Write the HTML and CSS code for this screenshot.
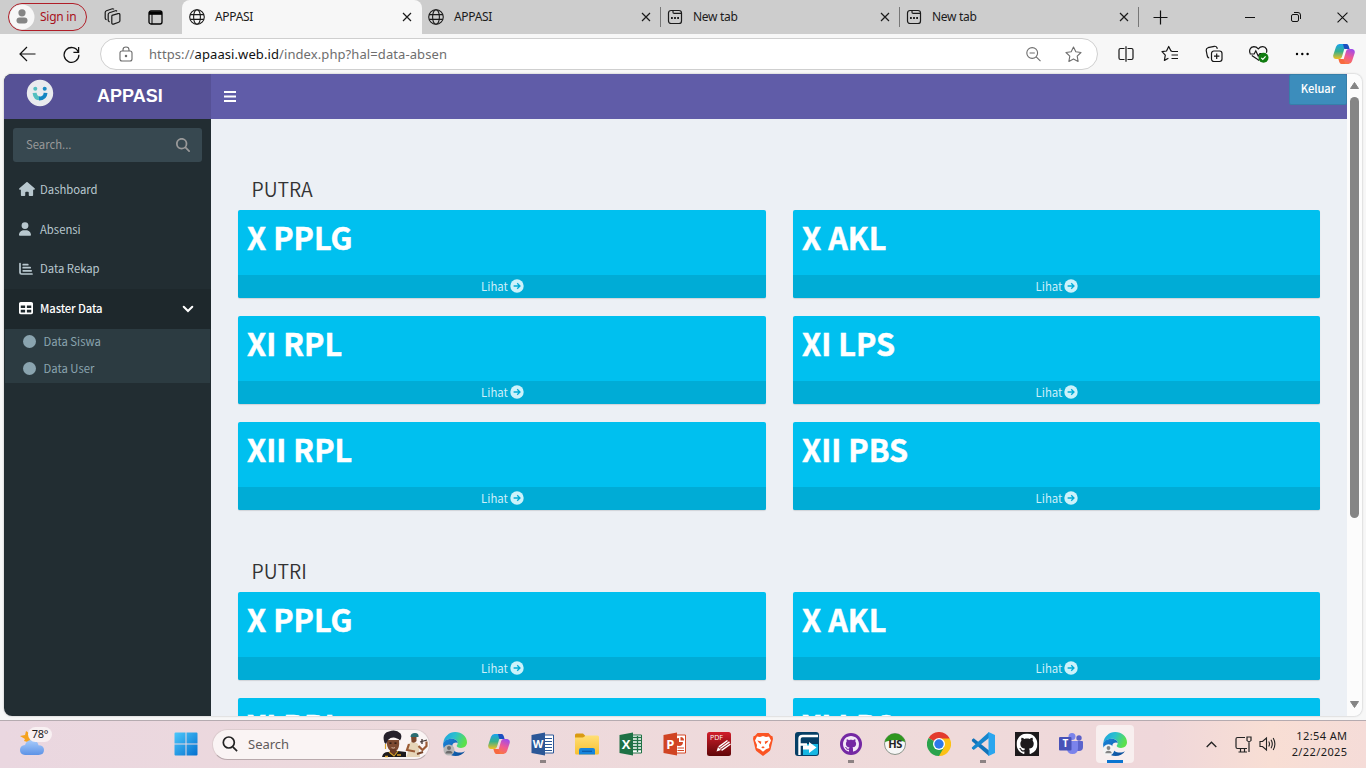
FILE: index.html
```html
<!DOCTYPE html>
<html lang="id">
<head>
<meta charset="utf-8">
<title>APPASI</title>
<link rel="stylesheet" href="styles.css">
</head>
<body>
<svg class="defs" width="0" height="0">
  <defs>
    <linearGradient id="gEdgeTop" x1="0" y1="0" x2="1" y2=".35"><stop offset="0" stop-color="#1d9fe0"/><stop offset=".5" stop-color="#2bc0cf"/><stop offset="1" stop-color="#5be04c"/></linearGradient>
    <linearGradient id="gEdgeLow" x1="0" y1="0" x2="1" y2="1"><stop offset="0" stop-color="#1a86dc"/><stop offset="1" stop-color="#0b4a94"/></linearGradient>
    <linearGradient id="gCpA" x1="0" y1="0" x2="0" y2="1"><stop offset="0" stop-color="#1aa3ee"/><stop offset=".5" stop-color="#36b08c"/><stop offset="1" stop-color="#f4bf1f"/></linearGradient>
    <linearGradient id="gCpB" x1=".7" y1="0" x2=".3" y2="1"><stop offset="0" stop-color="#a14bea"/><stop offset=".5" stop-color="#f05a92"/><stop offset="1" stop-color="#fb7a3a"/></linearGradient>
    <linearGradient id="gWin" x1="0" y1="0" x2="1" y2="1"><stop offset="0" stop-color="#4cc8fb"/><stop offset="1" stop-color="#0470cf"/></linearGradient>
    <linearGradient id="gFold" x1="0" y1="0" x2="0" y2="1"><stop offset="0" stop-color="#ffdf75"/><stop offset="1" stop-color="#f8c031"/></linearGradient>
    <linearGradient id="gPdf" x1="0" y1="0" x2="0" y2="1"><stop offset="0" stop-color="#d21e2b"/><stop offset="1" stop-color="#5f0608"/></linearGradient>
    <linearGradient id="gCloud" x1="0" y1="0" x2="0" y2="1"><stop offset="0" stop-color="#a9ccfb"/><stop offset="1" stop-color="#5d93e6"/></linearGradient>
    <symbol id="globe" viewBox="0 0 16 16"><g fill="none" stroke="currentColor" stroke-width="1.1"><circle cx="8" cy="8" r="7.3"/><ellipse cx="8" cy="8" rx="3.4" ry="7.3"/><path d="M1.2 5.6h13.6M1.2 10.4h13.6"/></g></symbol>
    <symbol id="close" viewBox="0 0 10 10"><path d="M1 1l8 8M9 1l-8 8" stroke="currentColor" stroke-width="1.2" fill="none"/></symbol>
    <symbol id="newtab" viewBox="0 0 16 16"><g fill="none" stroke="currentColor" stroke-width="1.2"><rect x="1.5" y="1.5" width="13" height="13" rx="2.6"/><path d="M6 1.5v1.7q0 1.2 1.2 1.2h7"/></g><path d="M4 8.1h1.8v1.8H4zM7.1 8.1h1.8v1.8H7.1zM10.2 8.1H12v1.8h-1.8z" fill="currentColor"/></symbol>
    <symbol id="copilot" viewBox="0 0 22 20"><path d="M6.500 0H15q-2.200 0-3 2.500L8.900 13q-.7 2-2.600 2H2.700Q-.4 14.500.3 11L3 2.800Q4 0 6.500 0z" fill="url(#gCpA)"/><path d="M10 0h3.500q1.600 0 2.200 2l.9 3h-5.300z" fill="#1b4fc0"/><path d="M15.500 20H7q2.200 0 3-2.500L13.100 7q.7-2 2.600-2h3.600q3.100.5 2.400 4L19 17.200q-1 2.800-3.500 2.800z" fill="url(#gCpB)"/><path d="M12 20H8.500q-1.600 0-2.200-2l-.9-3h5.300z" fill="#f8693f"/></symbol>
    <symbol id="edge" viewBox="0 0 24 24"><path d="M.3 11C1 4.700 6 0 12.200 0 18.800 0 24 4.600 24 10.300c0 3.400-2.600 5.700-6 5.700-2.700 0-4.500-1-4.300-2.200.1-.7 1-1.200 1-2.700C14.700 8.600 12 6.800 8.800 6.800 5 6.800 2 8.500.3 11z" fill="url(#gEdgeTop)"/><path d="M.1 12.600C.1 9 4.200 6.800 8.500 6.800c3.300 0 6.200 1.700 6.200 4.200-1-1-5.500-.8-5.500 3.400 0 3.700 3.500 6.200 7.800 6.200 2 0 3.600-.6 5-1.400C20 22.300 16.500 24 12.500 24 5.700 24 .1 18.800.1 12.600z" fill="url(#gEdgeLow)"/></symbol>
    <symbol id="octocat" viewBox="0 0 16 16"><path d="M8 0C3.580 0 0 3.580 0 8c0 3.540 2.290 6.530 5.470 7.590.4.070.55-.17.55-.38 0-.19-.01-.82-.01-1.490-2.010.37-2.530-.49-2.690-.94-.09-.23-.48-.94-.82-1.130-.28-.15-.68-.52-.01-.53.63-.01 1.080.58 1.230.82.72 1.210 1.870.87 2.330.66.070-.52.28-.87.51-1.070-1.780-.2-3.640-.89-3.640-3.950 0-.87.31-1.590.82-2.150-.08-.2-.36-1.020.08-2.120 0 0 .67-.21 2.200.82.64-.18 1.320-.27 2-.27s1.360.09 2 .27c1.530-1.040 2.200-.82 2.200-.82.44 1.100.16 1.920.08 2.120.51.56.82 1.270.82 2.150 0 3.070-1.870 3.750-3.650 3.950.29.25.54.73.54 1.480 0 1.070-.01 1.930-.01 2.200 0 .21.15.46.55.38A8.010 8.010 0 0016 8c0-4.420-3.580-8-8-8z" fill="currentColor"/></symbol>
    <symbol id="go" viewBox="0 0 14 14"><circle cx="7" cy="7" r="6.700" fill="#ccf2fb"/><path d="M3.600 7h6.200M7.200 4.200L10 7l-2.800 2.800" fill="none" stroke="#00acd6" stroke-width="1.300"/></symbol>
  </defs>
</svg>

<div class="browser">
  <header class="tabbar">
    <div class="signin">
      <svg width="26" height="26" viewBox="0 0 26 26"><circle cx="13" cy="13" r="12.500" fill="#f7f7f7"/><circle cx="13" cy="8.800" r="3.600" fill="#858585"/><rect x="7.500" y="13.500" width="11" height="6" rx="3" fill="#858585"/></svg>
      <span>Sign in</span>
    </div>
    <svg class="workspaces" width="18" height="18" viewBox="0 0 18 18" fill="none" stroke="#1b1b1b" stroke-width="1.200" stroke-linejoin="round"><path d="M8 7.400l6-1.800q1.600-.4 1.900 1v6.200q0 1-1.200 1.400l-5.200 1.900q-1.500.4-1.700-1V8.300z"/><path d="M5.600 13.900l-.6-.4q-.8-.5-.8-1.500V6.600q0-1.300 1.200-1.800l6-2q1-.3 1.500.6"/><path d="M2.700 11.800l-.7-.4q-.8-.5-.8-1.500V4.500q0-1.300 1.200-1.800l6-1.900q1-.2 1.500.6"/></svg>
    <svg class="tabactions" width="15" height="15" viewBox="0 0 15 15"><rect x="1" y="1" width="13" height="13" rx="2" fill="none" stroke="#000" stroke-width="1.300"/><path d="M1 1.500h13v3.300H1z"/><path d="M4 4v10" stroke="#000"/></svg>
    <div class="tab active"><svg width="16" height="16"><use href="#globe"/></svg><span>APPASI</span><svg width="10" height="10"><use href="#close"/></svg></div>
    <div class="tab"><svg width="16" height="16"><use href="#globe"/></svg><span>APPASI</span><svg width="10" height="10"><use href="#close"/></svg></div>
    <div class="tab line"><svg width="16" height="16"><use href="#newtab"/></svg><span>New tab</span><svg width="10" height="10"><use href="#close"/></svg></div>
    <div class="tab line"><svg width="16" height="16"><use href="#newtab"/></svg><span>New tab</span><svg width="10" height="10"><use href="#close"/></svg></div>
    <div class="plus"><svg width="15" height="15" viewBox="0 0 15 15"><path d="M7.500 .5v14M.5 7.500h14" stroke="#111" stroke-width="1.200"/></svg></div>
    <div class="winctl">
      <svg width="10" height="10" viewBox="0 0 10 10"><path d="M0 5.500h10" stroke="#111"/></svg>
      <svg width="10" height="10" viewBox="0 0 10 10" fill="none" stroke="#111"><rect x=".5" y="2.500" width="7" height="7" rx="1.500"/><path d="M3 .5h4q2.500 0 2.500 2.500v4"/></svg>
      <svg width="11" height="11" viewBox="0 0 10 10"><path d="M.5 .5l9 9M9.500 .5l-9 9" stroke="#111" fill="none"/></svg>
    </div>
  </header>

  <div class="toolbar">
    <svg class="back" width="17" height="16" viewBox="0 0 17 16" fill="none" stroke="#111" stroke-width="1.200"><path d="M16.500 8H1M8 1L1 8l7 7"/></svg>
    <svg class="reload" width="17" height="17" viewBox="0 0 17 17" fill="none" stroke="#111" stroke-width="1.250"><path d="M15.300 6A7.400 7.400 0 1 0 15.900 8.800M15.600 1v5.300h-5.200"/></svg>
    <div class="omnibox">
      <svg class="lock" width="14" height="16" viewBox="0 0 14 16" fill="none" stroke="#6a6a6a" stroke-width="1.100"><rect x="1" y="5" width="12" height="10" rx="2"/><path d="M4 5V3.800Q4 1 7 1t3 2.800V5"/><circle cx="7" cy="10" r=".7" fill="#6a6a6a"/></svg>
      <span class="url">https://<b>apaasi.web.id</b>/index.php?hal=data-absen</span>
      <svg class="zoomout" width="15" height="15" viewBox="0 0 15 15" fill="none" stroke="#6f6f6f" stroke-width="1.100"><circle cx="6.200" cy="6" r="5.400"/><path d="M3.600 6h5.200M10.200 9.900l4.300 4.300"/></svg>
      <svg class="star" width="17" height="17" viewBox="0 0 17 17" fill="none" stroke="#6f6f6f" stroke-width="1.100" stroke-linejoin="round"><path d="M8.500 1l2.300 4.800 5.200.7-3.800 3.700.9 5.200-4.600-2.500-4.600 2.500.9-5.200L1 6.500l5.200-.7z"/></svg>
    </div>
    <div class="tools">
      <svg width="18" height="18" viewBox="0 0 18 18" fill="none" stroke="#161616" stroke-width="1.200"><path d="M7.500 3.500h-4Q2 3.500 2 5v8q0 1.500 1.500 1.500h4M10.500 3.500h4Q16 3.500 16 5v8q0 1.500-1.500 1.500h-4M9 1.200v15.600"/></svg>
      <svg width="18" height="18" viewBox="0 0 18 18" fill="none" stroke="#161616" stroke-width="1.200" stroke-linejoin="round"><path d="M11 6.200l-1-.2L7.700 1.500 5.500 6 1 6.700l3.300 3.500-.9 5.200 4-2.100M10.500 6.500H17M10.500 10H17M10.500 13.500H17"/></svg>
      <svg width="18" height="18" viewBox="0 0 18 18" fill="none" stroke="#161616" stroke-width="1.200"><rect x="6.500" y="6" width="10.500" height="10.500" rx="2.400"/><path d="M11.700 8.600v5.300M9 11.200h5.400M4.200 13Q2.700 12.700 2.300 11L1.200 5.500Q1 3.300 3 2.700l6.300-1.400q2-.3 2.700 1.500l.3 1"/></svg>
      <svg width="20" height="18" viewBox="0 0 20 18" fill="none" stroke="#161616" stroke-width="1.200"><path d="M10 15.500L8.200 14M1.200 8.600C0 6 .7 2 4.800 1.700q2.600 0 4.500 2.100 1.900-2.200 4.500-2.100c3.600.2 4.600 3.600 3.600 6M.8 9h4.400l1.600-3.200L9.200 11l1.700-2.400h2M2.800 10.500L8 14"/><circle cx="14.500" cy="12.700" r="5" fill="#107c10" stroke="none"/><path d="M12.300 12.800l1.500 1.500 2.800-3" stroke="#fff"/></svg>
      <svg width="18" height="18" viewBox="0 0 18 18"><circle cx="4" cy="9" r="1.200"/><circle cx="9.300" cy="9" r="1.200"/><circle cx="14.600" cy="9" r="1.200"/></svg>
      <svg class="assistant" width="22" height="20"><use href="#copilot"/></svg>
    </div>
  </div>

  <div class="page">
    <aside class="sidebar">
      <div class="brand">
        <svg width="28" height="28" viewBox="0 0 28 28"><circle cx="14" cy="14" r="13.200" fill="#e9ebee"/><circle cx="9.300" cy="9.700" r="2" fill="#54bfc0"/><circle cx="18.700" cy="9.700" r="2" fill="#1b8bc4"/><path d="M8.600 13.800Q9 19.300 14.300 19.300" fill="none" stroke="#54bfc0" stroke-width="4"/><path d="M19.600 13.800Q19.200 19.300 13 19.600" fill="none" stroke="#1385c2" stroke-width="3.800"/></svg>
        <span>APPASI</span>
      </div>
      <div class="search"><span>Search...</span><svg width="14" height="14" viewBox="0 0 512 512"><path fill="#999" d="M416 208c0 45.900-14.900 88.300-40 122.700L502.600 457.400c12.500 12.500 12.500 32.800 0 45.300s-32.800 12.500-45.300 0L330.700 376c-34.400 25.200-76.800 40-122.700 40C93.100 416 0 322.900 0 208S93.100 0 208 0S416 93.100 416 208zM208 352a144 144 0 1 0 0-288 144 144 0 1 0 0 288z"/></svg></div>
      <nav class="menu">
        <a><svg width="16" height="14" viewBox="0 0 576 512"><path fill="currentColor" d="M575.800 255.500c0 18-15 32.100-32 32.100l-32 0 .7 160.200c0 2.700-.2 5.400-.5 8.100l0 16.200c0 22.100-17.900 40-40 40l-80 0c-22.100 0-40-17.900-40-40l0-88c0-17.700-14.300-32-32-32l-64 0c-17.700 0-32 14.300-32 32l0 88c0 22.100-17.900 40-40 40l-80 0c-22.100 0-40-17.900-40-40l0-184.500-32 0c-18 0-32-14-32-32.100c0-9 3-17 10-24L266.400 8c7-7 15-8 22-8s15 2 21 7L564.800 231.500c8 7 12 15 11 24z"/></svg><span>Dashboard</span></a>
        <a><svg width="12" height="14" viewBox="0 0 448 512"><path fill="currentColor" d="M224 256A128 128 0 1 0 224 0a128 128 0 1 0 0 256zm-45.700 48C79.800 304 0 383.800 0 482.300C0 498.700 13.300 512 29.700 512l388.600 0c16.400 0 29.700-13.300 29.700-29.700C448 383.800 368.200 304 269.700 304l-91.400 0z"/></svg><span>Absensi</span></a>
        <a><svg width="14" height="14" viewBox="0 0 14 14" fill="none" stroke="currentColor" stroke-width="1.700" stroke-linecap="round"><path d="M1 1.500v9q0 1.500 1.500 1.500H13M4.200 2.700h4.600M4.200 5.700h7M4.200 8.800h8"/></svg><span>Data Rekap</span></a>
        <a class="open"><svg width="14" height="14" viewBox="0 0 512 512"><path fill="currentColor" d="M64 256l0-96 160 0 0 96L64 256zm0 64l160 0 0 96L64 416l0-96zm224 96l0-96 160 0 0 96-160 0zM448 256l-160 0 0-96 160 0 0 96zM64 32C28.700 32 0 60.700 0 96L0 416c0 35.300 28.700 64 64 64l384 0c35.300 0 64-28.700 64-64l0-320c0-35.300-28.700-64-64-64L64 32z"/></svg><span>Master Data</span><svg class="chev" width="12" height="8" viewBox="0 0 12 8"><path d="M1.700 1.700L6 6l4.300-4.300" fill="none" stroke="#fff" stroke-width="2" stroke-linecap="round"/></svg></a>
      </nav>
      <nav class="submenu"><a><i></i><span>Data Siswa</span></a><a><i></i><span>Data User</span></a></nav>
    </aside>

    <div class="main">
      <div class="topnav">
        <svg width="12" height="11" viewBox="0 0 12 11"><path d="M0 1h12M0 5.500h12M0 10h12" stroke="#fff" stroke-width="1.900"/></svg>
        <a class="logout">Keluar</a>
      </div>
      <main class="content">
        <h2>PUTRA</h2>
        <section class="grid">
          <article><h3>X PPLG</h3><a><span>Lihat</span><svg width="14" height="14"><use href="#go"/></svg></a></article>
          <article><h3>X AKL</h3><a><span>Lihat</span><svg width="14" height="14"><use href="#go"/></svg></a></article>
          <article><h3>XI RPL</h3><a><span>Lihat</span><svg width="14" height="14"><use href="#go"/></svg></a></article>
          <article><h3>XI LPS</h3><a><span>Lihat</span><svg width="14" height="14"><use href="#go"/></svg></a></article>
          <article><h3>XII RPL</h3><a><span>Lihat</span><svg width="14" height="14"><use href="#go"/></svg></a></article>
          <article><h3>XII PBS</h3><a><span>Lihat</span><svg width="14" height="14"><use href="#go"/></svg></a></article>
        </section>
        <h2>PUTRI</h2>
        <section class="grid">
          <article><h3>X PPLG</h3><a><span>Lihat</span><svg width="14" height="14"><use href="#go"/></svg></a></article>
          <article><h3>X AKL</h3><a><span>Lihat</span><svg width="14" height="14"><use href="#go"/></svg></a></article>
          <article><h3>XI RPL</h3></article>
          <article><h3>XI LPS</h3></article>
        </section>
      </main>
    </div>
    <div class="scrollbar">
      <svg width="9" height="7" viewBox="0 0 9 7"><path d="M4.500 .5L8.500 6.500h-8z" fill="#858585" stroke="#858585" stroke-linejoin="round"/></svg>
      <div class="thumb"></div>
      <svg width="9" height="7" viewBox="0 0 9 7"><path d="M4.500 6.500L8.500 .5h-8z" fill="#858585" stroke="#858585" stroke-linejoin="round"/></svg>
    </div>
  </div>
</div>

<footer class="taskbar">
  <div class="weather">
    <svg width="34" height="30" viewBox="0 0 34 30"><path d="M8 4l3 2 4-2v6l-2 6-7-2 1-2-5-3 5-1z" fill="#f5a21f"/><path d="M7 28q-5-.3-5-5t5-5q1.500-5 7-5t6.500 5.200q5.500 0 5.500 4.800t-5.500 5z" fill="url(#gCloud)"/></svg>
    <span>78°</span>
  </div>
  <svg class="start" width="24" height="24" viewBox="0 0 24 24"><path d="M1.500 .5H11.500V11.500H.5V1.500q0-1 1-1zM12.500 .5H22.500q1 0 1 1v10h-11zM.5 12.500h11v11h-10q-1 0-1-1zM12.500 12.500h11v10q0 1-1 1h-10z" fill="url(#gWin)"/></svg>
  <div class="tasksearch">
    <svg width="16" height="16" viewBox="0 0 16 16" fill="none" stroke="#222" stroke-width="1.700"><circle cx="6.800" cy="6.500" r="5.500"/><path d="M10.800 10.800l4.300 4.300"/></svg>
    <span>Search</span>
    <svg class="people" width="48" height="28" viewBox="0 0 48 28">
      <path d="M1 27q1-5 6-5l10-1 8 1v5z" fill="#1d1a1c"/><path d="M6 10h12q1 8-3 11.500-3 2-6-1Q5 17 6 10z" fill="#7d4930"/><path d="M9 19h6v4l-3 2-3-2z" fill="#6b3b26"/><path d="M3 11Q1 3 8 1.500q7-2.500 11.500 2 2 3.500-.5 7-1-1.500-3-2-5-2.500-9 1.500L5 14q-2-1-2-3z" fill="#25202a"/><path d="M8.500 13.200h2M13.500 13.200h2" stroke="#1c100c" stroke-width="1.200"/><path d="M10.500 17.600q1.800 1 3.500 0" stroke="#e9c9b8" stroke-width=".8" fill="none"/><path d="M4.500 14v5M8 22l5 4 4-5" stroke="#d9a32c" stroke-width="1.200" fill="none"/><path d="M4 26.500h3M16 25h4" stroke="#d9a32c" stroke-width="1.500"/>
      <path d="M25 27q2-3 2-7-1-6 3-8l6 1q3 3 2 8l1 6z" fill="#e6d5b8"/><path d="M30 6h5.500v5q-2 3-5 1z" fill="#7b472c"/><path d="M29.500 7q0-4 4.500-4 4 0 3.500 4z" fill="#2a6b70"/><path d="M28 14l-2 6 8 1.500M37.500 16l4 4 4-4v-4.500" fill="none" stroke="#9b5b35" stroke-width="2.200"/><path d="M39 12l7-2M41 9v5" stroke="#3a2d2a" stroke-width="1.300"/><path d="M36 24l6-2" stroke="#784328" stroke-width="2"/>
    </svg>
  </div>
  <div class="apps">
    <div class="app"><svg width="26" height="26" viewBox="-1 -1 26 26"><use href="#edge" width="24" height="24"/><circle cx="6" cy="18" r="5.500" fill="#b7b7b7"/><circle cx="6" cy="16" r="2" fill="#6b6b6b"/><path d="M2.500 21.500q0-2.700 3.500-2.700t3.500 2.700z" fill="#6b6b6b"/></svg></div>
    <div class="app"><svg width="22" height="20"><use href="#copilot"/></svg></div>
    <div class="app run"><svg width="24" height="24" viewBox="0 0 24 24"><path d="M12 3h10.500v18H12z" fill="#fff" stroke="#2b5797"/><path d="M14 6.500h7M14 9.500h7M14 12.500h7M14 15.500h7M14 18.500h7" stroke="#2b5797"/><path d="M.5 3L14 .5v23L.5 21z" fill="#2b5797"/><text class="glyph" x="7" y="16" font-size="11">W</text></svg></div>
    <div class="app"><svg width="24" height="24" viewBox="0 0 24 24"><path d="M0 3q0-1.500 1.500-1.500H8L10.500 4v3H0z" fill="#d99a12"/><path d="M0 5.500h8L11 3.500h11.500Q24 3.500 24 5v16q0 1.500-1.500 1.500h-21Q0 22.500 0 21z" fill="url(#gFold)"/><path d="M4 22.500V18q0-2 2-2h12q2 0 2 2v4.500z" fill="#1684db"/><path d="M7 19.300h10" stroke="#0a5ba8" stroke-width="1.200"/></svg></div>
    <div class="app"><svg width="24" height="24" viewBox="0 0 24 24"><path d="M12 3h10.500v18H12z" fill="#fff" stroke="#217346"/><path d="M14 5.500h8M14 8.500h8M14 11.500h8M14 14.500h8M14 17.500h8M18.500 4v16" stroke="#217346" stroke-width="1.300"/><path d="M.5 3L14 .5v23L.5 21z" fill="#1e7145"/><text class="glyph" x="7" y="16.500" font-size="13">X</text></svg></div>
    <div class="app"><svg width="24" height="24" viewBox="0 0 24 24"><path d="M12 3h10.500v18H12z" fill="#fff" stroke="#d24726"/><path d="M16 6a4 4 0 1 0 4 4h-4z" fill="#d24726"/><path d="M17.500 5v3.500H21q0-3.500-3.500-3.500z" fill="#d24726"/><path d="M14.500 16h6.500M14.500 18.500h6.500" stroke="#d24726" stroke-width="1.200" fill="none"/><path d="M.5 3L14 .5v23L.5 21z" fill="#d04423"/><text class="glyph" x="7.300" y="16.500" font-size="13">P</text></svg></div>
    <div class="app"><svg width="24" height="24" viewBox="0 0 24 24"><rect width="24" height="24" rx="2.500" fill="url(#gPdf)"/><text class="pdf" x="9.500" y="7.500">PDF</text><path d="M9.500 19.500l1.500-4.500 3 3z" fill="#fff"/><path d="M11.800 14.800L20.500 8.500M13.200 16.500L22.500 9.800M14.500 18.300L23.500 12" stroke="#fff" stroke-width="1.500"/></svg></div>
    <div class="app"><svg width="22" height="24" viewBox="0 0 22 24"><path d="M5.500 1h11L19 3.700l1.500.5L21 7l-.5 2-2 8.500q-.5 1.300-1.500 2L11 24l-6-4.500q-1-.7-1.500-2L1.500 9 1 7l.5-2.800L3 3.700z" fill="#fb5423"/><path d="M5 4.500l3 .4 3-.8 3 .8 3-.4 2 4-2 4.500.3 3-3.300 1.200-3 2.600-3-2.600L4.700 16l.3-3L3 8.500z" fill="#fff"/><path d="M5.300 8.500l4 1-.5 2.700-2-1.700zM16.700 8.500l-4 1 .5 2.700 2-1.700zM9.200 15.200l1.800-1 1.800 1-1.800 1.300z" fill="#fb5423"/></svg></div>
    <div class="app"><svg width="24" height="24" viewBox="0 0 24 24"><rect width="24" height="24" rx="3" fill="#063f66"/><path d="M8 23V12h15v9q0 2-2 2z" fill="#16b7e3"/><path d="M4.500 23V7q0-3 3-3H23M5 12.500h7" fill="none" stroke="#fff" stroke-width="2.400"/><path d="M8 13.500h6v-3.500l7.500 5.500-7.500 5.500v-3.500H8z" fill="#fff"/></svg></div>
    <div class="app run"><svg width="24" height="24" viewBox="0 0 24 24"><circle cx="12" cy="12" r="11" fill="#7428a3"/><g color="#f4e9f7"><use href="#octocat" x="4" y="4" width="16" height="16"/></g></svg></div>
    <div class="app"><svg width="24" height="24" viewBox="0 0 24 24"><circle cx="12" cy="12" r="10.500" fill="#f7f7f7" stroke="#8b9389"/><path d="M1.700 10a10.500 10.500 0 0 1 20.600 0q-10-4-20.600 0z" fill="#2f961e"/><text class="hs" x="12" y="16.300">HS</text></svg></div>
    <div class="app"><svg width="24" height="24" viewBox="0 0 24 24"><path d="M12 12L1.600 6A12 12 0 0 1 22.400 6z" fill="#e33b2e"/><path d="M12 12V24A12 12 0 0 0 22.400 6H12z" fill="#fbc116"/><path d="M12 12l5.200 3L12 24A12 12 0 0 1 1.600 6z" fill="#2aa34c"/><path d="M12 6.500h10.600L20 4H12z" fill="#e33b2e"/><circle cx="12" cy="12" r="6" fill="#fff"/><circle cx="12" cy="12" r="4.700" fill="#2c79ea"/></svg></div>
    <div class="app run"><svg width="24" height="24" viewBox="0 0 24 24"><path d="M1 7.500l1.700-1.300L18 18.500V24L.800 9z" fill="#1173b9"/><path d="M.8 15.500L18 0v6L2.700 18 1 16.500z" fill="#1686cd"/><path d="M17.500 0L24 3v18l-6.500 3z" fill="#2aa6ef"/></svg></div>
    <div class="app"><svg width="24" height="24" viewBox="0 0 24 24"><rect width="24" height="24" fill="#1d1a1c"/><g color="#fff"><use href="#octocat" x="1.500" y="1.500" width="21" height="21"/></g></svg></div>
    <div class="app"><svg width="24" height="24" viewBox="0 0 24 24"><circle cx="20" cy="6" r="2.700" fill="#5b5fc7"/><circle cx="13" cy="4.500" r="3.500" fill="#7b83eb"/><path d="M16 9h7q1 0 1 1v5q0 4-4 4h-4z" fill="#5b63cc"/><path d="M8 9h11v7q0 6-5.500 6T8 16z" fill="#7b83eb"/><rect y="5" width="12.500" height="13.500" rx="1" fill="#4852b8"/><text class="glyph" x="6.300" y="15.300" font-size="10">T</text></svg></div>
    <div class="app current"><svg width="26" height="26" viewBox="-1 -1 26 26"><use href="#edge" width="24" height="24"/><circle cx="5.500" cy="18" r="5.700" fill="#f4f4f4"/><circle cx="5.500" cy="16" r="1.900" fill="#858585"/><path d="M2.300 21.300q0-2.600 3.200-2.600t3.200 2.600z" fill="#858585"/></svg></div>
  </div>
  <div class="tray">
    <svg class="up" width="11" height="7" viewBox="0 0 11 7"><path d="M.7 6l4.800-4.800L10.300 6" fill="none" stroke="#222" stroke-width="1.300"/></svg>
    <svg class="net" width="17" height="17" viewBox="0 0 17 17" fill="none" stroke="#222" stroke-width="1.200"><path d="M10 1.500H2.500Q1 1.500 1 3v8q0 1.500 1.500 1.500H12M5.500 12.500v3M9.500 12.500v3M3.500 16h8.500"/><path d="M12 1h4v3.500q-2 2.500-4 0zM14 6v10"/></svg>
    <svg class="vol" width="17" height="16" viewBox="0 0 17 16" fill="none" stroke="#222" stroke-width="1.100"><path d="M1 5.500h2.500L7.500 2v12l-4-3.500H1zM9.700 5.500q1.600 2.500 0 5M12 3.700q2.600 4.300 0 8.600M14.200 2q3.400 6 0 12"/></svg>
    <div class="clock"><span>12:54 AM</span><span>2/22/2025</span></div>
  </div>
</footer>
</body>
</html>
```
FILE: styles.css
```css
* { box-sizing: border-box; }
body { margin: 0; width: 1366px; height: 768px; overflow: hidden; background: #f7f7f7; font-family: "Noto Sans", "Open Sans", sans-serif; font-size: 12px; color: #1b1b1b; }
svg { display: block; flex: none; }
.defs { position: absolute; }
.browser { height: 720px; display: flex; flex-direction: column; }

/* tab strip */
.tabbar { height: 34px; background: #cdcdcd; display: flex; align-items: center; flex: none; }
.signin { width: 79px; height: 28px; margin-left: 8px; border: 1px solid #b01e28; border-radius: 14px; display: flex; align-items: center; gap: 5px; color: #a8121c; font-size: 12px; letter-spacing: -.25px; }
.signin span { padding-bottom: 1px; }
.workspaces { margin-left: 17px; }
.tabactions { margin-left: 26px; }
.tab { width: 239px; height: 34px; padding: 0 11px 0 6px; display: flex; align-items: center; font-size: 12px; }
.tab span { flex: 1; margin-left: 10px; padding-bottom: 1px; letter-spacing: -.3px; }
.tab.active { width: 240px; margin-left: 19px; padding-left: 7px; background: #f7f7f7; border-radius: 8px 8px 0 0; }
.tab.line { background: linear-gradient(#777, #777) no-repeat 0 7px / 1px 20px; margin-left: -1px; padding-left: 7px; width: 240px; }
.tab svg:last-child { margin-right: -1px; }
.plus { height: 20px; width: 30px; margin-left: -1px; padding-left: 14px; border-left: 1px solid #777; display: flex; align-items: center; }
.winctl { margin-left: auto; padding-right: 18px; display: flex; align-items: center; gap: 36px; }

/* address bar */
.toolbar { height: 40px; flex: none; display: flex; align-items: center; background: #f7f7f7; }
.back { margin-left: 19px; }
.reload { margin-left: 27px; }
.omnibox { width: 998px; height: 32px; margin-left: 20px; border: 1px solid #cfcfcf; border-radius: 16px; background: #fff; display: flex; align-items: center; }
.lock { margin-left: 18px; }
.url { flex: 1; margin-left: 16px; font-size: 13px; letter-spacing: .09px; color: #6e6e6e; }
.url b { font-weight: 400; color: #111; }
.zoomout { margin-right: 24px; }
.star { margin-right: 15px; }
.tools { flex: 1; display: flex; gap: 26px; align-items: center; padding-left: 19px; }
.tools svg:nth-child(5) { margin-left: -2px; }
.tools .assistant { margin-left: -4px; }

/* viewport */
.page { height: 642px; margin: 0 4px; border-radius: 8px; overflow: hidden; display: flex; background: #ecf0f5; box-shadow: 0 0 2px #aaa; font-family: "Noto Sans CJK SC", sans-serif; }
.sidebar { width: 207px; background: #222d32; }
.brand { height: 45px; background: #565196; display: flex; padding: 5px 0 0 22px; color: #fff; }
.brand span { margin-left: 43px; font: bold 18px/34px "Liberation Sans", Arial, sans-serif; }
.search { margin: 9px 9px 0; height: 34px; border-radius: 3px; background: #374850; display: flex; align-items: center; justify-content: space-between; padding: 0 12px 1px 13px; color: #999; font-size: 11.3px; }
.search span, .menu span, .submenu span, article a span { padding-bottom: 2px; }
.menu { margin-top: 8px; color: #b8c7ce; font-size: 11.300px; }
.menu a { height: 39.700px; padding-left: 15px; display: flex; align-items: center; }
.menu a svg:first-child { margin-right: 5px; margin-top: -1px; }
.menu a:nth-child(2) svg { margin-right: 9px; }
.menu a:nth-child(n+3) svg:first-child { margin-right: 7px; }
.menu .open { background: #1e282c; color: #fff; font-weight: 500; letter-spacing: -.12px; }
.menu .chev { margin-left: auto; margin-right: 17px; }
.submenu { margin: 0 1px; background: #2c3b41; color: #8aa4af; font-size: 11.300px; }
.submenu a { display: flex; align-items: center; height: 27px; padding-left: 18px; }
.submenu i { width: 13px; height: 13px; border-radius: 50%; background: #8aa4af; margin: -2px 7.500px 0 0; }
.main { width: 1136px; }
.topnav { height: 45px; background: #605ca8; display: flex; justify-content: space-between; padding-left: 13px; }
.topnav svg { margin-top: 17px; }
.logout { width: 58px; height: 31px; background: #3c8dbc; border: 1px solid #367fa9; border-radius: 2px; color: #fff; font-size: 11.200px; line-height: 27px; text-align: center; font-weight: 500; letter-spacing: -.1px; }
.content { padding: 51px 27px 0; }
.content h2 { margin: 0 0 0 13.500px; height: 40px; font-size: 19.400px; line-height: 38px; font-weight: 350; color: #333; }
.grid { display: grid; grid-template-columns: 528px 527px; gap: 18px 27px; }
.grid + h2 { margin-top: 42px; }
article { height: 88px; border-radius: 2px; background: #00c0ef; box-shadow: 0 1px 1px rgba(0,0,0,.12); color: #fff; display: flex; flex-direction: column; overflow: hidden; }
article h3 { margin: 0; padding-left: 9px; height: 65px; font-size: 30.600px; line-height: 54px; font-weight: 700; -webkit-text-stroke: .5px #fff; }
article a { height: 23px; padding-left: 1px; background: #00acd6; color: #cceffa; display: flex; align-items: center; justify-content: center; gap: 2px; font-size: 11.400px; }
article a svg { margin-top: -2px; }
.scrollbar { width: 15px; background: #fcfcfc; display: flex; flex-direction: column; align-items: center; padding: 8px 0 8px; }
.thumb { width: 9px; height: 421px; margin: 8px 0 auto; background: #858585; border-radius: 5px; }

/* taskbar */
.taskbar { height: 48px; padding-bottom: 1px; border-top: 1px solid #b5abb0; background: linear-gradient(90deg, #ead7e0 0, #edd9dc 30%, #efdada 70%, #efd7da 85%, #f8ded4 93%, #f5dcd8); display: flex; align-items: center; }
.weather { width: 174px; padding-left: 18px; display: flex; align-items: flex-start; height: 38px; }
.weather svg { margin-top: 2px; }
.weather span { margin: 2px 0 0 -24px; height: 15px; width: 24px; border-radius: 8px; background: #f8f0f2; font-size: 11px; line-height: 14px; text-align: center; z-index: 1; letter-spacing: -.3px; }
.tasksearch { width: 218px; height: 31px; margin-left: 14px; border-radius: 16px; background: #faf4f4; border: 1px solid #ddcccf; border-bottom-color: #b9a9ac; display: flex; align-items: center; padding-left: 9px; }
.tasksearch span { flex: 1; margin-left: 10px; font-size: 13px; line-height: 18px; color: #5f5a5b; }
.apps { display: flex; margin-left: 3px; }
.app { width: 44px; height: 46px; display: flex; align-items: center; justify-content: center; }
.run { background: linear-gradient(#8c8283, #8c8283) no-repeat center 39px / 6px 3px; }
.current { width: 38px; height: 38px; margin: 4px 3px; border-radius: 4px; background: linear-gradient(#0a74d0, #0a74d0) no-repeat center 35px / 16px 3px, #f8efef; }
.glyph { font-family: "Open Sans", sans-serif; font-weight: 700; fill: #fff; text-anchor: middle; }
.pdf { font: 7px "Open Sans", sans-serif; fill: #fff; text-anchor: middle; }
.hs { font: 700 11px "Open Sans", sans-serif; fill: #222; text-anchor: middle; letter-spacing: -.5px; }
.tray { flex: 1; display: flex; align-items: center; padding-right: 18.500px; }
.up { margin-left: 69px; }
.net { margin-left: 18px; }
.vol { margin-left: 7px; }
.clock { margin-left: auto; display: flex; flex-direction: column; text-align: right; font-size: 11px; line-height: 16px; letter-spacing: .4px; }
```
